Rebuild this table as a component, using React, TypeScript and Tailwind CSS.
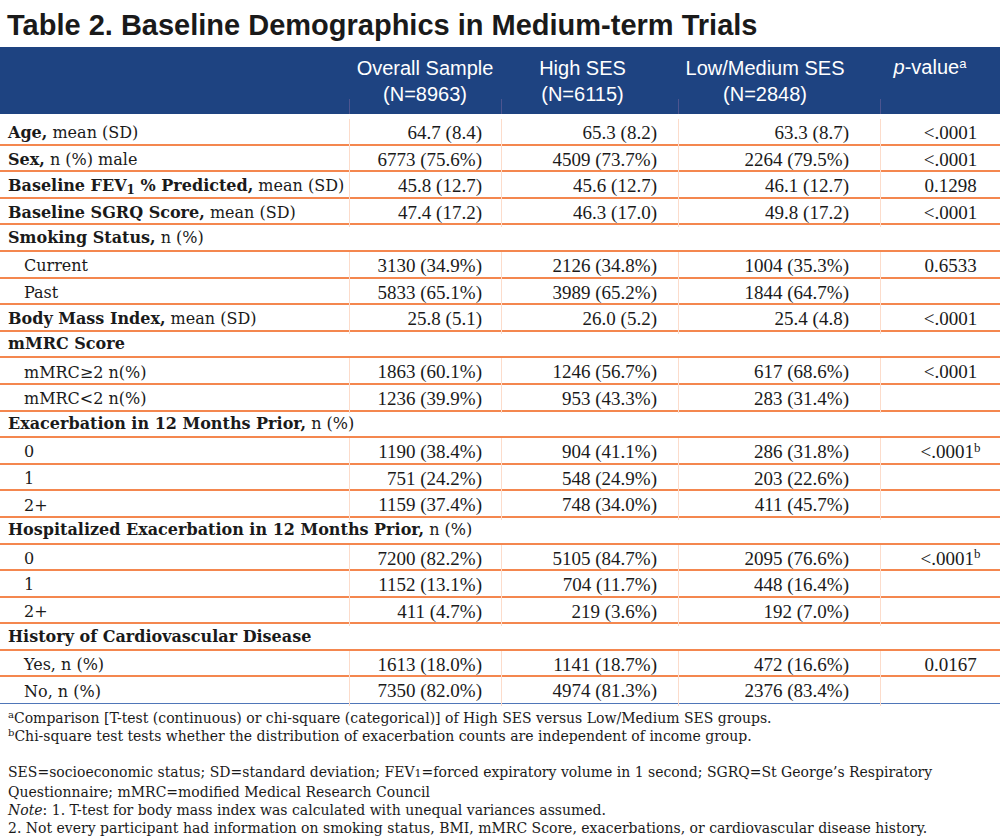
import React from 'react';

type Row =
  | { kind: 'section'; bold: string; rest?: string }
  | { kind: 'data'; bold?: string; rest?: React.ReactNode; indent?: boolean; vals: [string, string, string]; p?: string; pSup?: string };

const rows: Row[] = [
  { kind: 'data', bold: 'Age,', rest: ' mean (SD)', vals: ['64.7 (8.4)', '65.3 (8.2)', '63.3 (8.7)'], p: '<.0001' },
  { kind: 'data', bold: 'Sex,', rest: ' n (%) male', vals: ['6773 (75.6%)', '4509 (73.7%)', '2264 (79.5%)'], p: '<.0001' },
  {
    kind: 'data',
    bold: 'Baseline FEV',
    rest: (
      <>
        <span className="font-bold">
          <span className="text-[12px] relative top-[3px]">1</span> % Predicted,
        </span>
        {' mean (SD)'}
      </>
    ),
    vals: ['45.8 (12.7)', '45.6 (12.7)', '46.1 (12.7)'],
    p: '0.1298',
  },
  { kind: 'data', bold: 'Baseline SGRQ Score,', rest: ' mean (SD)', vals: ['47.4 (17.2)', '46.3 (17.0)', '49.8 (17.2)'], p: '<.0001' },
  { kind: 'section', bold: 'Smoking Status,', rest: ' n (%)' },
  { kind: 'data', rest: 'Current', indent: true, vals: ['3130 (34.9%)', '2126 (34.8%)', '1004 (35.3%)'], p: '0.6533' },
  { kind: 'data', rest: 'Past', indent: true, vals: ['5833 (65.1%)', '3989 (65.2%)', '1844 (64.7%)'] },
  { kind: 'data', bold: 'Body Mass Index,', rest: ' mean (SD)', vals: ['25.8 (5.1)', '26.0 (5.2)', '25.4 (4.8)'], p: '<.0001' },
  { kind: 'section', bold: 'mMRC Score' },
  { kind: 'data', rest: 'mMRC≥2 n(%)', indent: true, vals: ['1863 (60.1%)', '1246 (56.7%)', '617 (68.6%)'], p: '<.0001' },
  { kind: 'data', rest: 'mMRC<2 n(%)', indent: true, vals: ['1236 (39.9%)', '953 (43.3%)', '283 (31.4%)'] },
  { kind: 'section', bold: 'Exacerbation in 12 Months Prior,', rest: ' n (%)' },
  { kind: 'data', rest: '0', indent: true, vals: ['1190 (38.4%)', '904 (41.1%)', '286 (31.8%)'], p: '<.0001', pSup: 'b' },
  { kind: 'data', rest: '1', indent: true, vals: ['751 (24.2%)', '548 (24.9%)', '203 (22.6%)'] },
  { kind: 'data', rest: '2+', indent: true, vals: ['1159 (37.4%)', '748 (34.0%)', '411 (45.7%)'] },
  { kind: 'section', bold: 'Hospitalized Exacerbation in 12 Months Prior,', rest: ' n (%)' },
  { kind: 'data', rest: '0', indent: true, vals: ['7200 (82.2%)', '5105 (84.7%)', '2095 (76.6%)'], p: '<.0001', pSup: 'b' },
  { kind: 'data', rest: '1', indent: true, vals: ['1152 (13.1%)', '704 (11.7%)', '448 (16.4%)'] },
  { kind: 'data', rest: '2+', indent: true, vals: ['411 (4.7%)', '219 (3.6%)', '192 (7.0%)'] },
  { kind: 'section', bold: 'History of Cardiovascular Disease' },
  { kind: 'data', rest: 'Yes, n (%)', indent: true, vals: ['1613 (18.0%)', '1141 (18.7%)', '472 (16.6%)'], p: '0.0167' },
  { kind: 'data', rest: 'No, n (%)', indent: true, vals: ['7350 (82.0%)', '4974 (81.3%)', '2376 (83.4%)'] },
];

const cols = 'grid grid-cols-[349px_152px_177px_202px_120px]';
const numCell = "border-l border-[#fcdccb] flex items-center justify-end font-['Liberation_Serif',serif] text-[19px]";

const HeadCell: React.FC<{ children: React.ReactNode; className?: string }> = ({ children, className = '' }) => (
  <div className={`relative flex flex-col items-center justify-center leading-[26px] ${className}`}>
    <div className="absolute left-0 bottom-0 h-[15px] w-px bg-[#4c5590]" />
    {children}
  </div>
);

export default function App() {
  return (
    <div className="w-[1000px] h-[838px] bg-white text-[#1a1a1a] font-['DejaVu_Serif',serif] overflow-hidden">
      <h1 className="h-[47px] pt-[9px] pl-[7px] leading-[32px] text-[29px] font-bold font-['Liberation_Sans',Arial,sans-serif] text-[#1a1a1a]">
        Table 2. Baseline Demographics in Medium-term Trials
      </h1>

      <div className={`${cols} h-[67px] bg-[#1e4381] text-white text-[20px] font-['Liberation_Sans',Arial,sans-serif]`}>
        <div />
        <HeadCell>
          <span>Overall Sample</span>
          <span>(N=8963)</span>
        </HeadCell>
        <HeadCell className="pr-[14px]">
          <span>High SES</span>
          <span>(N=6115)</span>
        </HeadCell>
        <HeadCell className="pr-[28px]">
          <span>Low/Medium SES</span>
          <span>(N=2848)</span>
        </HeadCell>
        <HeadCell className="pr-[20px] justify-start pt-[7px]">
          <span>
            <i>p</i>-value<sup className="text-[13px]">a</sup>
          </span>
        </HeadCell>
      </div>

      <div className="mt-[5px] flex flex-col">
        {rows.map((r, i) => {
          const last = i === rows.length - 1;
          const rowBorder = last ? 'border-b border-[#4f76b8]' : 'border-b-2 border-[#f4874f]';
          if (r.kind === 'section') {
            return (
              <div key={i} className={`h-[26.6px] flex items-center pl-[8px] text-[16px] ${rowBorder}`}>
                <span className="whitespace-pre">
                  <span className="font-bold">{r.bold}</span>
                  {r.rest}
                </span>
              </div>
            );
          }
          return (
            <div key={i} className={`${cols} h-[26.6px] ${rowBorder}`}>
              <div className={`flex items-center text-[16px] ${r.indent ? 'pl-[24px]' : 'pl-[8px]'}`}>
                <span className="whitespace-pre">
                  {r.bold && <span className="font-bold">{r.bold}</span>}
                  {r.rest}
                </span>
              </div>
              <div className={`${numCell} pr-[19px]`}>{r.vals[0]}</div>
              <div className={`${numCell} pr-[21px]`}>{r.vals[1]}</div>
              <div className={`${numCell} pr-[31px]`}>{r.vals[2]}</div>
              <div className="border-l border-[#fcdccb] flex items-center justify-center pl-[20px] font-['Liberation_Serif',serif] text-[19px]">
                <span>
                  {r.p}
                  {r.pSup && <sup className="text-[13px]">{r.pSup}</sup>}
                </span>
              </div>
            </div>
          );
        })}
      </div>

      <div className="mt-[5px] pl-[8px] text-[14px] leading-[18px]">
        <p>
          <sup className="text-[10px]">a</sup>Comparison [T-test (continuous) or chi-square (categorical)] of High SES versus Low/Medium SES groups.
        </p>
        <p>
          <sup className="text-[10px]">b</sup>Chi-square test tests whether the distribution of exacerbation counts are independent of income group.
        </p>
        <p className="mt-[18px]">
          SES=socioeconomic status; SD=standard deviation; FEV<span className="text-[11px]">1</span>=forced expiratory volume in 1 second; SGRQ=St George’s Respiratory
          <br />
          Questionnaire; mMRC=modified Medical Research Council
        </p>
        <p>
          <i>Note</i>: 1. T-test for body mass index was calculated with unequal variances assumed.
        </p>
        <p>2. Not every participant had information on smoking status, BMI, mMRC Score, exacerbations, or cardiovascular disease history.</p>
      </div>
    </div>
  );
}
